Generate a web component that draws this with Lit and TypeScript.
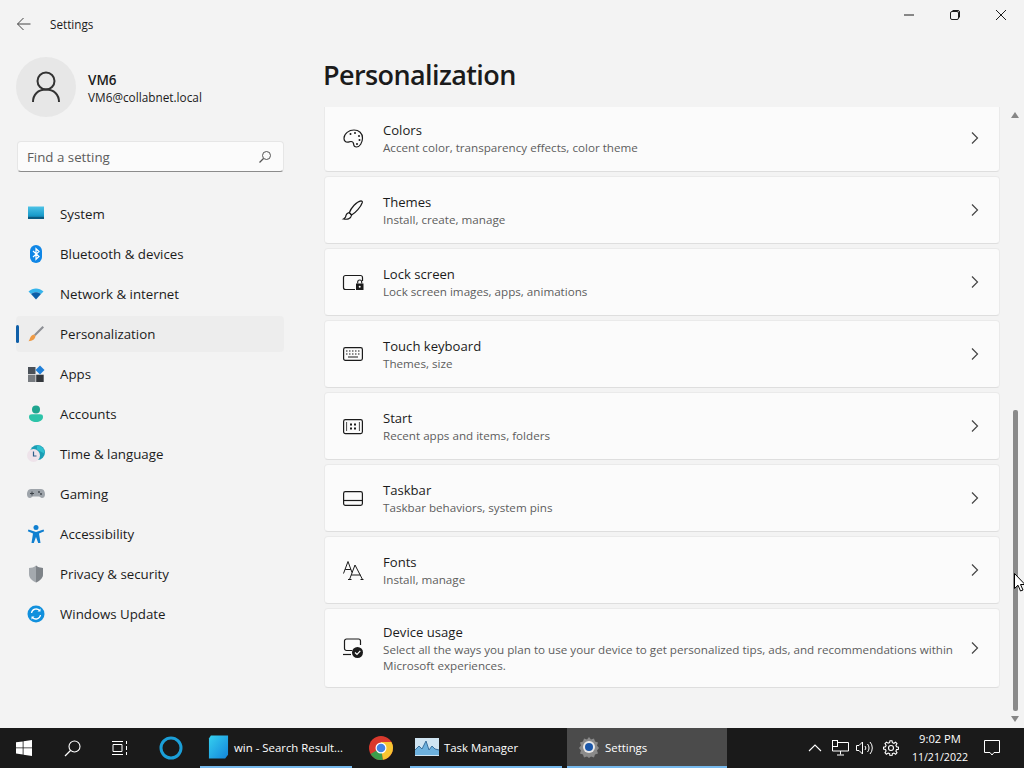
import { LitElement, html, css, svg } from "lit";
import { customElement } from "lit/decorators.js";

const nav: [string, any][] = [
  ["System", svg`<defs><linearGradient id="sy" x1="0" y1="0" x2="0" y2="1"><stop offset="0" stop-color="#4cc2e6"/><stop offset="0.7" stop-color="#1a9ccb"/><stop offset="1" stop-color="#0b5f88"/></linearGradient></defs><rect x="2" y="2.500" width="16" height="12.500" fill="url(#sy)"/><rect x="2" y="13" width="16" height="2" fill="#0b5a80"/>`],
  ["Bluetooth & devices", svg`<rect x="4" y="1" width="12" height="18" rx="6" fill="#0f86e6"/><path d="M7 7l6 5.500-3 2.800V4.700l3 2.800-6 5.500" fill="none" stroke="#fff" stroke-width="1.200"/>`],
  ["Network & internet", svg`<path d="M2.500 7.500C7 3.600 13 3.600 17.500 7.500L15 10C11.800 7.600 8.200 7.600 5 10z" fill="#35b4ec"/><path d="M5 10c3.200-2.400 6.800-2.400 10 0l-5 5.500z" fill="#0a5ea8"/>`],
  ["Personalization", svg`<path d="M16.500 2 18 3.500 9.500 12 8 10.500z" fill="#8d8f94"/><path d="M8 10.500 9.500 12c-.2 3-3 5-7 5.300 1.800-1.600 1-5.600 5.500-6.800z" fill="#ee9a45"/>`],
  ["Apps", svg`<rect x="2" y="3" width="7.500" height="7" fill="#4a5058"/><rect x="2" y="10.700" width="7.500" height="7.300" fill="#777b80"/><rect x="10.200" y="10.700" width="7.500" height="7.300" fill="#33373c"/><path d="M14 1.500 18.500 6 14 10.500 9.500 6z" fill="#1f7fd8"/>`],
  ["Accounts", svg`<circle cx="10" cy="5.500" r="4" fill="#1fa58f"/><path d="M3 13c0-2 1-2.700 3-2.700h8c2 0 3 .7 3 2.700 0 3.300-3.500 5-7 5s-7-1.700-7-5z" fill="#2cc3a8"/>`],
  ["Time & language", svg`<circle cx="11.500" cy="8.500" r="7.500" fill="#1b9eb5"/><path d="M11 1.500a7.500 7.500 0 0 1 7.500 8l-4-2-3.500-2z" fill="#2fc0cf"/><circle cx="7.500" cy="11.500" r="6.500" fill="#eee3ea"/><path d="M7.500 7.500V12h3" fill="none" stroke="#2c5f8a" stroke-width="1.200"/>`],
  ["Gaming", svg`<path d="M5 5h10c3 0 4 3 4 5.500 0 2.500-1.500 3.500-3 3.500-1.300 0-2-1.500-3-1.500H7c-1 0-1.700 1.500-3 1.500-1.500 0-3-1-3-3.500C1 8 2 5 5 5z" fill="#9ea4aa"/><path d="M4 9.500h4M6 7.500v4" stroke="#3d4248" stroke-width="1"/><circle cx="13" cy="8" r=".9" fill="#3d4248"/><circle cx="15" cy="10" r=".9" fill="#3d4248"/>`],
  ["Accessibility", svg`<circle cx="10" cy="3.500" r="2.500" fill="#0f7fd0"/><path d="M2.500 5.500 10 8l7.500-2.500.7 1.700L13 9.500l1.500 9.500h-2.300L10 13l-2.200 6H5.500L7 9.500 1.800 7.200z" fill="#0f7fd0"/>`],
  ["Privacy & security", svg`<path d="M10 1.500c2 1.800 4.500 2.500 7 2.500v6c0 4-3 6.800-7 8.500-4-1.700-7-4.500-7-8.500V4c2.500 0 5-.7 7-2.500z" fill="#a4a9ae"/><path d="M10 1.500c2 1.800 4.500 2.500 7 2.500v6c0 4-3 6.800-7 8.500z" fill="#7e8388"/>`],
  ["Windows Update", svg`<circle cx="10" cy="10" r="8.500" fill="#1190dd"/><path d="M5.500 9a4.700 4.700 0 0 1 8.200-2.300M14.500 11a4.700 4.700 0 0 1-8.200 2.300" fill="none" stroke="#fff" stroke-width="1.300"/><path d="M14.500 4.500v3h-3zM5.500 15.500v-3h3z" fill="#fff"/>`],
];

const cards: [string, any, any][] = [
  ["Colors", "Accent color, transparency effects, color theme", svg`<g fill="none" stroke="#1b1b1b" stroke-width="1.200"><path d="M11 2c5 0 8.500 3.400 8.500 8s-2.800 9-6 9c-1.600 0-2.700-.8-2.800-2.500-.1-2.200-1-3-2.700-3-1.500 0-2.200.6-3.300.6C2.500 14.100 1 12.600 1 10.300 1 5.500 6 2 11 2z"/></g><g fill="#1b1b1b"><circle cx="7.500" cy="6" r="1"/><circle cx="12" cy="5" r="1"/><circle cx="16" cy="8" r="1"/><circle cx="16.500" cy="12" r="1"/><circle cx="14" cy="16" r="1"/></g>`],
  ["Themes", "Install, create, manage", svg`<g fill="none" stroke="#1b1b1b" stroke-width="1.200"><path d="M18 .8c1 0 1.600.7 1.300 1.700C17.800 7 12.500 13 8.600 15L6.300 12.700C8 8 13.500 1.500 18 .8z"/><path d="M6.300 12.700C3.500 13 3 15 2.500 17c-.3 1-1 1.500-2 2 3 .6 7.500.3 8.100-4z"/></g>`],
  ["Lock screen", "Lock screen images, apps, animations", svg`<path d="M19.500 9V5.500a2 2 0 0 0-2-2h-15a2 2 0 0 0-2 2v10a2 2 0 0 0 2 2H12" fill="none" stroke="#1b1b1b" stroke-width="1.200"/><rect x="13" y="11.500" width="7.500" height="6.500" fill="#1b1b1b"/><path d="M14.700 11.500V10a2 2 0 0 1 4 0v1.500" fill="none" stroke="#1b1b1b" stroke-width="1.100"/><circle cx="16.700" cy="14.700" r="1" fill="#fff"/>`],
  ["Touch keyboard", "Themes, size", svg`<rect x=".6" y="3.600" width="18.800" height="12.800" rx="1.800" fill="none" stroke="#1b1b1b" stroke-width="1.200"/><path d="M3 7h1.500m1.500 0h1.500m1.500 0h1.500m1.500 0h1.500m1.500 0h1.500M3 10h1.500m1.500 0h1.500m1.500 0h1.500m1.500 0h1.500m1.500 0h1.500M5 13h10" stroke="#1b1b1b" stroke-width="1.200" fill="none"/>`],
  ["Start", "Recent apps and items, folders", svg`<rect x=".6" y="3.600" width="18.800" height="14" rx="1.800" fill="none" stroke="#1b1b1b" stroke-width="1.200"/><path d="M3.600 6v9M16.400 6v9" stroke="#1b1b1b" stroke-width=".8"/><g fill="#1b1b1b"><rect x="7" y="7.500" width="2" height="2"/><rect x="11" y="7.500" width="2" height="2"/><rect x="7" y="11.500" width="2" height="2"/><rect x="11" y="11.500" width="2" height="2"/></g>`],
  ["Taskbar", "Taskbar behaviors, system pins", svg`<rect x=".6" y="3.600" width="18.800" height="13.800" rx="1.800" fill="none" stroke="#1b1b1b" stroke-width="1.200"/><path d="M1 12.500h18" stroke="#1b1b1b" stroke-width="1.200"/>`],
  ["Fonts", "Install, manage", svg`<path d="M.5 13.500 5 1.500l4 11M2.200 9.500h5.600M6.500 19.500 12 5l7.500 14.500M8.200 15h9.300M5 19.500h3.500M17.500 19.500h3" fill="none" stroke="#1b1b1b" stroke-width="1"/>`],
  ["Device usage", "Select all the ways you plan to use your device to get personalized tips, ads, and recommendations within|Microsoft experiences.", svg`<path d="M9 12.500H3.500a2 2 0 0 1-2-2V3a2 2 0 0 1 2-2h12a2 2 0 0 1 2 2v4" fill="none" stroke="#1b1b1b" stroke-width="1.200"/><path d="M0 16.500h8" stroke="#1b1b1b" stroke-width="1.200"/><circle cx="14.500" cy="14.500" r="5.500" fill="#1b1b1b"/><path d="M12 14.500l2 2 3.300-3.700" fill="none" stroke="#fff" stroke-width="1.200"/>`],
];

@customElement("app-root")
export class AppRoot extends LitElement {
  static styles = css`
    :host { display: flex; flex-direction: column; width: 1024px; height: 768px; overflow: hidden; position: relative; background: #f3f3f3; color: #1b1b1b; font-family: "Open Sans", "Noto Sans", sans-serif; font-size: 13.3px; }
    svg { display: block; flex: none; }
    .window { flex: 1; min-height: 0; display: flex; }
    .side { width: 300px; flex: none; display: flex; flex-direction: column; padding: 0 16px; box-sizing: border-box; }
    .titlebar { height: 48px; display: flex; align-items: center; gap: 18px; font-size: 11.700px; }
    .user { display: flex; align-items: center; gap: 12px; margin-top: 9px; }
    .avatar { width: 60px; height: 60px; border-radius: 50%; background: #e7e7e7; display: flex; align-items: center; justify-content: center; }
    .utext { padding-top: 2px; }
    .uname { font-weight: 600; font-size: 13.500px; line-height: 18px; }
    .uemail { font-size: 11.800px; line-height: 17px; }
    .search { margin: 24px 0 0 1px; height: 31px; box-sizing: border-box; background: #fbfbfb; border: 1px solid #e6e6e6; border-bottom: 1px solid #8b8b8b; border-radius: 4px; display: flex; align-items: center; justify-content: space-between; padding: 0 11px 0 9px; color: #5d5d5d; font-size: 13.300px; }
    .nav { margin-top: 24px; display: flex; flex-direction: column; gap: 4px; }
    .item { height: 36px; display: flex; align-items: center; gap: 14px; padding-left: 10px; border-radius: 4px; position: relative; }
    .item.on { background: #ededed; }
    .item.on::before { content: ""; position: absolute; left: 0; top: 9px; width: 3px; height: 18px; border-radius: 2px; background: #0f5fa8; }
    .main { flex: 1; min-width: 0; display: flex; flex-direction: column; }
    .winbar { height: 30px; display: flex; justify-content: flex-end; }
    .wbtn { width: 46px; height: 30px; display: flex; align-items: center; justify-content: center; }
    .head { height: 77px; box-sizing: border-box; padding: 27px 0 0 23px; font-size: 27px; letter-spacing: -0.6px; font-weight: 600; line-height: 36px; }
    .body { flex: 1; min-height: 0; display: flex; }
    .list { flex: 1; overflow: hidden; display: flex; flex-direction: column; gap: 4px; padding: 0 0 0 24px; }
    .card { height: 68px; flex: none; box-sizing: border-box; background: #fbfbfb; border: 1px solid #eaeaea; border-bottom-color: #dedede; border-radius: 4px; display: flex; align-items: center; padding-left: 18px; }
    .card.first { margin-top: -3px; }
    .card.tall { height: 80px; }
    .ctext { margin-left: 20px; flex: 1; }
    .ctitle { font-size: 13.100px; line-height: 18px; }
    .csub { font-size: 11.650px; line-height: 16px; color: #5d5d5d; white-space: nowrap; position: relative; top: 1px; }
    .chev { margin-right: 19px; }
    .scroll { width: 24px; flex: none; display: flex; flex-direction: column; align-items: center; padding: 0 4px 0 10px; box-sizing: border-box; }
    .up { margin-top: 5px; }
    .down { margin-bottom: 6px; }
    .track { flex: 1; display: flex; flex-direction: column; justify-content: flex-end; padding-bottom: 5px; }
    .thumb { width: 5px; height: 301px; background: #8a8a8a; border-radius: 2px; }
    .task { height: 40px; flex: none; background: #1a1a1a; display: flex; color: #fff; font-size: 11.400px; }
    .tb { width: 48px; height: 40px; display: flex; align-items: center; justify-content: center; flex: none; }
    .cortana { margin-left: 3px; }
    .tapp { height: 40px; box-sizing: border-box; border-bottom: 2px solid #76b9ed; display: flex; align-items: center; gap: 5px; padding-left: 8px; flex: none; white-space: nowrap; width: 152px; }
    .tapp.edge { margin-left: 5px; }
    .chrome { margin-left: 5px; }
    .tapp.tm { margin-left: 5px; padding-left: 5px; }
    .tapp.active { background: #4b4b4b; width: 160px; margin-left: 5px; padding-left: 11px; }
    .tray { margin-left: auto; display: flex; align-items: center; }
    .chevup { margin-right: 10px; }
    .net { margin-right: 7px; }
    .vol { margin-right: 10px; }
    .clock { text-align: center; font-size: 11.200px; line-height: 18px; width: 64px; margin-left: 9px; }
    .date { font-size: 10.600px; }
    .notif { margin: 0 24px 0 12px; }
    .cursor { position: absolute; left: 1014px; top: 573px; }
  `;

  render() {
    return html`
      <div class="window">
        <div class="side">
          <div class="titlebar">
            <svg width="16" height="16" viewBox="0 0 16 16"><path d="M14.500 8H1.500M7.500 2 1.500 8l6 6" fill="none" stroke="#444" stroke-width="1"/></svg>
            <span>Settings</span>
          </div>
          <div class="user">
            <div class="avatar"><svg width="32" height="34" viewBox="0 0 32 34"><circle cx="16" cy="11" r="8.500" fill="none" stroke="#333" stroke-width="2"/><path d="M3 32c0-7.500 5-12.500 13-12.500S29 24.500 29 32" fill="none" stroke="#333" stroke-width="2"/></svg></div>
            <div class="utext"><div class="uname">VM6</div><div class="uemail">VM6@collabnet.local</div></div>
          </div>
          <div class="search"><span>Find a setting</span>
            <svg width="14" height="14" viewBox="0 0 14 14"><circle cx="8.500" cy="5.500" r="4" fill="none" stroke="#555" stroke-width="1"/><path d="M5.500 8.500 1.500 12.500" stroke="#555" stroke-width="1.200"/></svg>
          </div>
          <div class="nav">
            ${nav.map(([n, ic]) => html`<div class="item ${n === "Personalization" ? "on" : ""}"><svg width="20" height="20" viewBox="0 0 20 20">${ic}</svg><span>${n}</span></div>`)}
          </div>
        </div>
        <div class="main">
          <div class="winbar">
            <div class="wbtn"><svg width="10" height="10" viewBox="0 0 10 10"><path d="M0 5h10" stroke="#1b1b1b"/></svg></div>
            <div class="wbtn"><svg width="10" height="10" viewBox="0 0 10 10"><rect x=".5" y="1.500" width="8" height="8" rx="1.500" fill="none" stroke="#1b1b1b"/><path d="M2.500 .5h5.500a1.500 1.500 0 0 1 1.500 1.500v5.500" fill="none" stroke="#1b1b1b"/></svg></div>
            <div class="wbtn"><svg width="12" height="12" viewBox="0 0 12 12"><path d="M1 1l10 10M11 1 1 11" stroke="#1b1b1b"/></svg></div>
          </div>
          <div class="head">Personalization</div>
          <div class="body">
            <div class="list">
              ${cards.map(([t, s, ic], i) => html`<div class="card ${i === 0 ? "first" : ""} ${i === 7 ? "tall" : ""}">
                <svg width="20" height="20" viewBox="0 0 20 20" overflow="visible">${ic}</svg>
                <div class="ctext"><div class="ctitle">${t}</div>${(s as string).split("|").map((l) => html`<div class="csub">${l}</div>`)}</div>
                <svg class="chev" width="10" height="12" viewBox="0 0 10 12"><path d="M2 .5 7.500 6 2 11.500" fill="none" stroke="#444" stroke-width="1.200"/></svg>
              </div>`)}
            </div>
            <div class="scroll">
              <svg class="up" width="8" height="6" viewBox="0 0 8 6"><path d="M4 0 8 6H0z" fill="#868686"/></svg>
              <div class="track"><div class="thumb"></div></div>
              <svg class="down" width="8" height="6" viewBox="0 0 8 6"><path d="M0 0h8L4 6z" fill="#868686"/></svg>
            </div>
          </div>
        </div>
      </div>
      <div class="task">
        <div class="tb"><svg width="16" height="16" viewBox="0 0 16 16" fill="#fff"><path d="M0 2.300 6.700 1.400V7.500H0zM7.500 1.300 16 0V7.500H7.500zM0 8.300H6.700V14.500L0 13.600zM7.500 8.300H16V16L7.500 14.700z"/></svg></div>
        <div class="tb"><svg width="17" height="17" viewBox="0 0 17 17"><circle cx="10.500" cy="6.500" r="5.500" fill="none" stroke="#fff" stroke-width="1.100"/><path d="M6.500 10.500 1 16" stroke="#fff" stroke-width="1.300"/></svg></div>
        <div class="tb"><svg width="16" height="16" viewBox="0 0 16 16" fill="none" stroke="#fff"><path d="M0 1.500h11M0 14.500h11M1 4.500h9v7H1zM14.500 1v3M14.500 6v4M14.500 12v3"/></svg></div>
        <div class="tb cortana"><svg width="24" height="24" viewBox="0 0 24 24"><circle cx="12" cy="12" r="10" fill="none" stroke="#1b9fd8" stroke-width="3"/></svg></div>
        <div class="tapp edge"><svg width="21" height="24" viewBox="0 0 22 24"><defs><linearGradient id="ed" x1="0" y1="0" x2="1" y2="1"><stop offset="0" stop-color="#35d0ef"/><stop offset="1" stop-color="#1385dc"/></linearGradient></defs><path d="M3 0H21V20L18 24H1V3z" fill="url(#ed)"/></svg><span>win - Search Result...</span></div>
        <div class="tb chrome"><svg width="24" height="24" viewBox="0 0 24 24"><circle cx="12" cy="12" r="12" fill="#d9392d"/><path d="M12 12 1.600 18A12 12 0 0 0 14 23.800z" fill="#3c9d4b"/><path d="M12 12 14 23.800A12 12 0 0 0 22.400 6H12z" fill="#f7c531"/><circle cx="12" cy="12" r="5.500" fill="#fff"/><circle cx="12" cy="12" r="4.300" fill="#4283e4"/></svg></div>
        <div class="tapp tm"><svg width="24" height="18" viewBox="0 0 24 18"><rect width="24" height="18" fill="#cfe4f2"/><path d="M0 17V12l4-4 3 3 4-8 3 9 3-4 3 3 4 1v5z" fill="#6db1de"/><path d="M0 12l4-4 3 3 4-8 3 9 3-4 3 3 4 1" fill="none" stroke="#3a6f9c"/></svg><span>Task Manager</span></div>
        <div class="tapp active"><svg width="22" height="22" viewBox="0 0 22 22"><path d="M11 1l2 2.500 3-1 1 3 3 1-1 3 2 2.500-2 2.500 1 3-3 1-1 3-3-1-2 1.500-2-1.500-3 1-1-3-3-1 1-3-2-2.500 2-2.500-1-3 3-1 1-3 3 1z" fill="#8a8a8a"/><circle cx="11" cy="11" r="6" fill="#e8e8e8"/><circle cx="11" cy="11" r="4" fill="#1a56a8"/></svg><span>Settings</span></div>
        <div class="tray">
          <svg class="chevup" width="14" height="8" viewBox="0 0 14 8"><path d="M1 7l6-6 6 6" fill="none" stroke="#fff" stroke-width="1.100"/></svg>
          <svg class="net" width="17" height="16" viewBox="0 0 17 16" fill="none" stroke="#fff"><rect x=".5" y=".5" width="5" height="6"/><path d="M5.500 2.500h11v8.500H.5V6.500M8.500 11v3.500M5 15h7"/></svg>
          <svg class="vol" width="17" height="14" viewBox="0 0 17 14" fill="none" stroke="#fff"><path d="M.5 4.500H3L6.500 1v12L3 9.500H.5zM9 5a3 3 0 0 1 0 4M11.500 3a6 6 0 0 1 0 8M14 1a9 9 0 0 1 0 12"/></svg>
          <svg width="16" height="16" viewBox="0 0 16 16" fill="none" stroke="#fff" stroke-width="1.100"><circle cx="8" cy="8" r="2.500"/><path d="M7 .7h2l.4 2 1.500.6 1.700-1.100 1.400 1.400-1.100 1.700.6 1.500 2 .4v2l-2 .4-.6 1.500 1.100 1.700-1.400 1.400-1.700-1.100-1.500.6-.4 2H7l-.4-2-1.500-.6-1.700 1.100L2 12.700l1.100-1.700-.6-1.500-2-.4v-2l2-.4.6-1.500L2 3.500l1.400-1.400 1.700 1.100 1.500-.6z"/></svg>
          <div class="clock"><div>9:02 PM</div><div class="date">11/21/2022</div></div>
          <svg class="notif" width="16" height="16" viewBox="0 0 16 16" fill="none" stroke="#fff"><path d="M.5 .5h15v12H10l-2 2.500-2-2.500H.5z"/></svg>
        </div>
      </div>
      <svg class="cursor" width="11" height="19" viewBox="0 0 11 19"><path d="M.5.5V15.500L4 12.200 6.500 18 9 17 6.500 11.500H11z" fill="#fff" stroke="#000"/></svg>
    `;
  }
}
